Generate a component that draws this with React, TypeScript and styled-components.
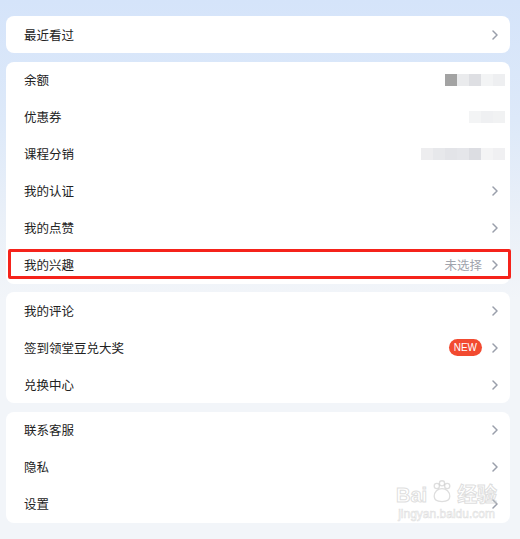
import styled, { createGlobalStyle } from "styled-components";

const GlobalStyle = createGlobalStyle`
  html, body {
    margin: 0;
    padding: 0;
  }
  body {
    font-family: "Noto Sans CJK SC", "Noto Sans", "Liberation Sans", sans-serif;
    background: #f2f5f9;
  }
`;

type Item = {
  label: string;
  value?: string;
  badge?: string;
  mosaic?: string[];
  chevron?: boolean;
  marked?: boolean;
};

const groups: Item[][] = [
  [{ label: "最近看过", chevron: true }],
  [
    {
      label: "余额",
      mosaic: ["#a3a3a3", "#eaebed", "#dedfe3", "#f3f4f5", "#eeeff1"],
    },
    {
      label: "优惠券",
      mosaic: ["#f3f4f5", "#eff0f2", "#f1f2f3"],
    },
    {
      label: "课程分销",
      mosaic: ["#ededef", "#e7e8eb", "#e3e4e8", "#e5e6ea", "#dcdde2", "#f4f4f5", "#f0f0f2"],
    },
    { label: "我的认证", chevron: true },
    { label: "我的点赞", chevron: true },
    { label: "我的兴趣", value: "未选择", chevron: true, marked: true },
  ],
  [
    { label: "我的评论", chevron: true },
    { label: "签到领堂豆兑大奖", badge: "NEW", chevron: true },
    { label: "兑换中心", chevron: true },
  ],
  [
    { label: "联系客服", chevron: true },
    { label: "隐私", chevron: true },
    { label: "设置", chevron: true },
  ],
];

export default function App() {
  return (
    <Page>
      <GlobalStyle />
      {groups.map((group, gi) => (
        <Card key={gi}>
          {group.map((item) => (
            <Row key={item.label}>
              <Label>{item.label}</Label>
              <Right>
                {item.value && <Value>{item.value}</Value>}
                {item.badge && <Badge>{item.badge}</Badge>}
                {item.mosaic && (
                  <Mosaic>
                    {item.mosaic.map((c, i) => (
                      <Tile key={i} $color={c} />
                    ))}
                  </Mosaic>
                )}
                {item.chevron && <Chevron />}
              </Right>
              {item.marked && <Marker />}
            </Row>
          ))}
        </Card>
      ))}
      <Watermark>
        <WmTop>
          Bai
          <Paw viewBox="0 0 30 30">
            <circle cx="9" cy="8" r="3" />
            <circle cx="15" cy="5" r="3" />
            <circle cx="21" cy="8" r="3" />
            <path d="M6 20c0-5 4-9 9-9s9 4 9 9c0 4-3 6-9 6s-9-2-9-6z" />
          </Paw>
          经验
        </WmTop>
        <WmBottom>jingyan.baidu.com</WmBottom>
      </Watermark>
    </Page>
  );
}

function Chevron() {
  return (
    <ChevronSvg viewBox="0 0 6 10">
      <polyline points="1,1 5,5 1,9" />
    </ChevronSvg>
  );
}

const Page = styled.div`
  position: relative;
  min-height: 539px;
  box-sizing: border-box;
  padding: 16px 10px 16px 6px;
  display: flex;
  flex-direction: column;
  gap: 8.5px;
  background: linear-gradient(
    180deg,
    #d5e4fa 0px,
    #dde9f9 120px,
    #eaf0f8 220px,
    #f2f5f9 300px,
    #f2f5f9 100%
  );
`;

const Card = styled.div`
  background: #fff;
  border-radius: 8px;
  display: flex;
  flex-direction: column;
`;

const Row = styled.div`
  position: relative;
  height: 37px;
  display: flex;
  align-items: center;
  justify-content: space-between;
  padding: 0 12px 0 18px;
`;

const Label = styled.span`
  font-size: 12.5px;
  line-height: 16px;
  color: #222;
`;

const Right = styled.div`
  display: flex;
  align-items: center;
  gap: 10px;
`;

const Value = styled.span`
  font-size: 12.5px;
  line-height: 16px;
  color: #a0a4ad;
`;

const Badge = styled.span`
  height: 17px;
  padding: 0 5px;
  border-radius: 9px;
  background: #f24a30;
  color: #fff;
  font-family: "Liberation Sans", Arial, sans-serif;
  font-size: 10px;
  line-height: 17px;
`;

const Mosaic = styled.div`
  display: flex;
  margin-right: -7px;
  filter: blur(0.4px);
`;

const Tile = styled.div<{ $color: string }>`
  width: 12px;
  height: 12px;
  background: ${(p) => p.$color};
`;

const ChevronSvg = styled.svg`
  width: 6px;
  height: 10px;
  fill: none;
  stroke: #9a9fab;
  stroke-width: 1.5;
  stroke-linecap: round;
  stroke-linejoin: round;
`;

const Marker = styled.div`
  position: absolute;
  left: 2px;
  right: -1px;
  top: 2px;
  bottom: 5px;
  border: 3px solid #f5231b;
  border-radius: 2px;
  pointer-events: none;
`;

const Watermark = styled.div`
  position: absolute;
  left: 396px;
  top: 483px;
  display: flex;
  flex-direction: column;
  align-items: center;
  color: rgba(200, 200, 200, 0.35);
  pointer-events: none;
`;

const WmTop = styled.div`
  display: flex;
  align-items: center;
  font-family: "Liberation Sans", "Noto Sans CJK SC", sans-serif;
  font-size: 20px;
  font-weight: bold;
  line-height: 24px;
  color: transparent;
  -webkit-text-stroke: 1px rgba(200, 200, 200, 0.6);
`;

const Paw = styled.svg`
  width: 26px;
  height: 26px;
  fill: none;
  stroke: rgba(200, 200, 200, 0.6);
  stroke-width: 1.5;
  margin: -6px 2px 0;
`;

const WmBottom = styled.div`
  font-family: "Liberation Sans", sans-serif;
  font-size: 12px;
  line-height: 14px;
  color: transparent;
  -webkit-text-stroke: 0.6px rgba(200, 200, 200, 0.6);
`;
